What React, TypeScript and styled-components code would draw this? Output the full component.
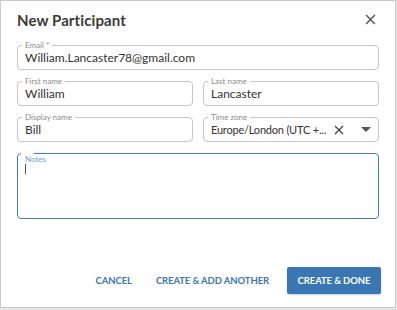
import React from "react"
import styled, { createGlobalStyle } from "styled-components"

const GlobalStyle = createGlobalStyle`
  html, body {
    margin: 0;
    padding: 0;
    background: #e6e6e6;
    font-family: "Source Sans Pro", "Lato", "Liberation Sans", sans-serif;
  }
`

export const Dialog = styled.div`
  width: 396px;
  height: 308px;
  box-sizing: border-box;
  background: #fff;
  border: 1px solid #c9c9c9;
  display: flex;
  flex-direction: column;
  padding: 9px 16px 13px 16px;
`

export const Header = styled.div`
  display: flex;
  align-items: center;
  justify-content: space-between;
  height: 20px;
`

export const Title = styled.h2`
  margin: 0;
  font-size: 15px;
  font-weight: 700;
  color: #3a3a3a;
  letter-spacing: 0.1px;
`

export const CloseButton = styled.button`
  border: 0;
  background: none;
  padding: 0;
  margin-right: 2px;
  width: 12px;
  height: 12px;
  display: flex;
  cursor: pointer;
`

export const Form = styled.div`
  display: grid;
  grid-template-columns: minmax(0, 1fr) minmax(0, 1fr);
  column-gap: 10px;
  row-gap: 11px;
  margin-top: 15px;
`

export const Field = styled.div<{ $wide?: boolean; $focused?: boolean; $tall?: boolean }>`
  position: relative;
  grid-column: ${(p) => (p.$wide ? "1 / span 2" : "auto")};
  height: ${(p) => (p.$tall ? "66px" : "25px")};
  box-sizing: border-box;
  border: ${(p) => (p.$focused ? "1.5px solid #3d7fc0" : "1px solid #c6c6c6")};
  border-radius: 4px;
  display: flex;
  align-items: ${(p) => (p.$tall ? "flex-start" : "center")};
  padding: 0 7px;
`

export const Label = styled.span`
  position: absolute;
  left: 4px;
  top: -5px;
  padding: 0 3px;
  background: #fff;
  font-size: 8px;
  line-height: 9px;
  color: #8a8a8a;
`

export const Notch = styled.span`
  position: absolute;
  left: 3px;
  top: -2px;
  width: 13px;
  height: 3px;
  background: #fff;
`

export const FloatLabel = styled.span`
  position: absolute;
  left: 7px;
  top: 1px;
  font-size: 8px;
  line-height: 9px;
  color: #6e9bc9;
`

export const Value = styled.span<{ $compact?: boolean }>`
  flex: 1;
  min-width: 0;
  font-size: ${(p) => (p.$compact ? "11px" : "12px")};
  letter-spacing: ${(p) => (p.$compact ? "-0.2px" : "0")};
  color: #333;
  white-space: nowrap;
  overflow: hidden;
`

export const Caret = styled.span`
  display: block;
  width: 1px;
  height: 10px;
  background: #555;
  margin-top: 10px;
`

export const IconRow = styled.div`
  display: flex;
  align-items: center;
  gap: 17px;
  margin-left: 4px;
`

export const Actions = styled.div`
  margin-top: auto;
  display: flex;
  justify-content: flex-end;
  align-items: center;
  gap: 4px;
  margin-right: -2px;
`

export const TextButton = styled.button`
  border: 0;
  background: none;
  font-family: inherit;
  font-size: 9.5px;
  font-weight: 700;
  letter-spacing: -0.1px;
  color: #3b77b0;
  padding: 0 10px;
  height: 27px;
  white-space: nowrap;
  cursor: pointer;
`

export const PrimaryButton = styled(TextButton)`
  background: #3977b4;
  color: #fff;
  border-radius: 2px;
  padding: 0;
  width: 94px;
  margin-left: 4px;
  box-shadow: 0 1px 2px rgba(0, 0, 0, 0.2);
`

function CloseIcon({ size = 10, color = "#555" }: { size?: number; color?: string }) {
  return (
    <svg width={size} height={size} viewBox="0 0 10 10">
      <path d="M1 1 L9 9 M9 1 L1 9" stroke={color} strokeWidth="1.3" fill="none" />
    </svg>
  )
}

function ArrowDown() {
  return (
    <svg width="10" height="6" viewBox="0 0 10 6">
      <path d="M0 0 H10 L5 5 Z" fill="#555" />
    </svg>
  )
}

export default function App(): JSX.Element {
  return (
    <>
      <GlobalStyle />
      <Dialog>
        <Header>
          <Title>New Participant</Title>
          <CloseButton>
            <CloseIcon size={11} />
          </CloseButton>
        </Header>
        <Form>
          <Field $wide>
            <Label>Email *</Label>
            <Value>William.Lancaster78@gmail.com</Value>
          </Field>
          <Field>
            <Label>First name</Label>
            <Value>William</Value>
          </Field>
          <Field>
            <Label>Last name</Label>
            <Value>Lancaster</Value>
          </Field>
          <Field>
            <Label>Display name</Label>
            <Value>Bill</Value>
          </Field>
          <Field>
            <Label>Time zone</Label>
            <Value $compact>Europe/London (UTC +...</Value>
            <IconRow>
              <CloseIcon size={10} color="#444" />
              <ArrowDown />
            </IconRow>
          </Field>
          <Field $wide $focused $tall>
            <Notch />
            <FloatLabel>Notes</FloatLabel>
            <Caret />
          </Field>
        </Form>
        <Actions>
          <TextButton>CANCEL</TextButton>
          <TextButton>CREATE &amp; ADD ANOTHER</TextButton>
          <PrimaryButton>CREATE &amp; DONE</PrimaryButton>
        </Actions>
      </Dialog>
    </>
  )
}
